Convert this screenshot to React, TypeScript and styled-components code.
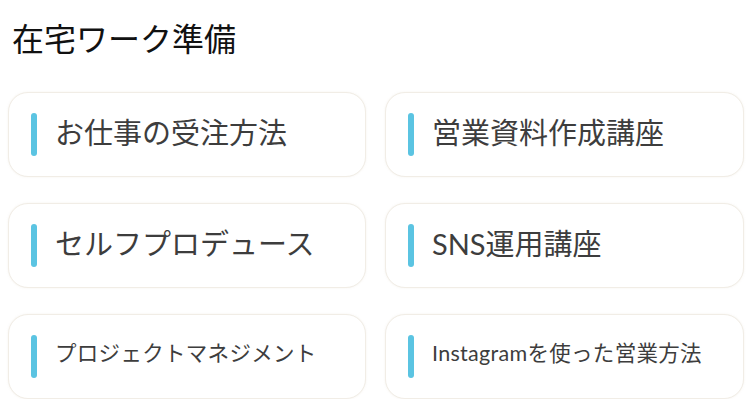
import React from "react";
import styled, { createGlobalStyle } from "styled-components";

const Global = createGlobalStyle`
  html, body { margin: 0; padding: 0; background: #ffffff; }
  body { font-family: Lato, "Noto Sans CJK JP", sans-serif; }
`;

const Page = styled.div`
  width: 750px;
  padding: 13px 6px 0 8px;
  box-sizing: border-box;
`;

const Title = styled.h1`
  margin: 0 0 0 4px;
  font-family: "Noto Sans CJK JP", sans-serif;
  font-weight: 400;
  font-size: 32px;
  line-height: 48px;
  color: #111111;
`;

const Grid = styled.div`
  margin-top: 31px;
  display: grid;
  grid-template-columns: 358px 359px;
  column-gap: 19px;
  row-gap: 26px;
`;

const Card = styled.div`
  height: 85px;
  box-sizing: border-box;
  border: 1px solid #f1ede6;
  border-radius: 20px;
  box-shadow: 0 0 2px rgba(210, 200, 180, 0.25);
  background: #ffffff;
  display: flex;
  align-items: center;
  padding-left: 22px;
`;

const Bar = styled.span`
  flex: none;
  width: 6px;
  height: 43px;
  border-radius: 3px;
  background: #5bc4e2;
  margin-right: 18px;
`;

const Label = styled.span<{ $small?: boolean }>`
  font-size: ${(p) => (p.$small ? "21.5px" : "29px")};
  font-weight: 400;
  letter-spacing: ${(p) => (p.$small ? "0.3px" : "0px")};
  color: #3d3d3d;
  line-height: 1;
  margin-top: -5px;
  white-space: nowrap;
`;

const items: { label: string; small?: boolean }[] = [
  { label: "お仕事の受注方法" },
  { label: "営業資料作成講座" },
  { label: "セルフプロデュース" },
  { label: "SNS運用講座" },
  { label: "プロジェクトマネジメント", small: true },
  { label: "Instagramを使った営業方法", small: true },
];

export default function App() {
  return (
    <Page>
      <Global />
      <Title>在宅ワーク準備</Title>
      <Grid>
        {items.map((it) => (
          <Card key={it.label}>
            <Bar />
            <Label $small={it.small}>{it.label}</Label>
          </Card>
        ))}
      </Grid>
    </Page>
  );
}
